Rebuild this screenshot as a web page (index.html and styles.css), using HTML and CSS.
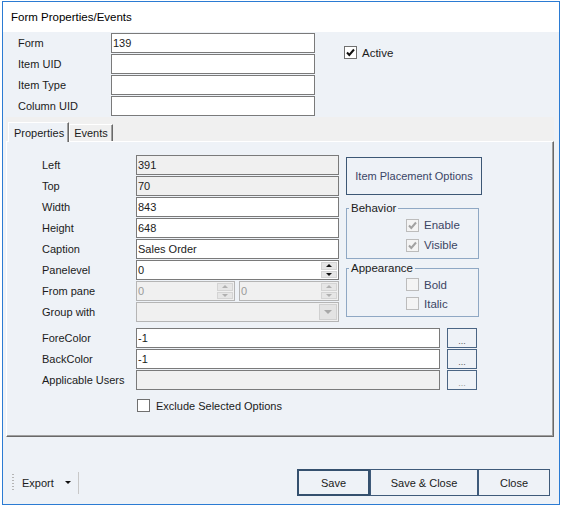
FILE: index.html
```html
<!DOCTYPE html>
<html lang="en">
<head>
    <meta charset="UTF-8">
    <title>Form Properties/Events</title>
    <link rel="stylesheet" href="styles.css">
</head>
<body>
    <div class="window">
        <div class="titlebar">Form Properties/Events</div>

        <div class="header">
            <div class="header-grid">
                <span class="label">Form</span>
                <div class="field">139</div>
                <span class="label">Item UID</span>
                <div class="field"></div>
                <span class="label">Item Type</span>
                <div class="field"></div>
                <span class="label">Column UID</span>
                <div class="field"></div>
            </div>
            <div class="check active-check">
                <span class="box">
                    <svg width="11" height="11" viewBox="0 0 11 11"><path d="M2 5.5 L4.3 8 L9 2.5" fill="none" stroke="#111" stroke-width="2"/></svg>
                </span>
                <span>Active</span>
            </div>
        </div>

        <div class="tabs">
            <div class="tab-strip">
                <span class="tab selected">Properties</span>
                <span class="tab">Events</span>
            </div>
            <div class="tab-page">
                <div class="page-top">
                    <div class="prop-grid">
                        <span class="label">Left</span>
                        <div class="field disabled-bg">391</div>
                        <span class="label">Top</span>
                        <div class="field disabled-bg">70</div>
                        <span class="label">Width</span>
                        <div class="field">843</div>
                        <span class="label">Height</span>
                        <div class="field">648</div>
                        <span class="label">Caption</span>
                        <div class="field">Sales Order</div>
                        <span class="label">Panelevel</span>
                        <div class="field spin-field">
                            <span class="value">0</span>
                            <span class="spin">
                                <span class="spin-btn"><i class="up"></i></span>
                                <span class="spin-btn"><i class="down"></i></span>
                            </span>
                        </div>
                        <span class="label">From pane</span>
                        <div class="pane-pair">
                            <div class="field spin-field disabled">
                                <span class="value">0</span>
                                <span class="spin">
                                    <span class="spin-btn"><i class="up"></i></span>
                                    <span class="spin-btn"><i class="down"></i></span>
                                </span>
                            </div>
                            <div class="field spin-field disabled">
                                <span class="value">0</span>
                                <span class="spin">
                                    <span class="spin-btn"><i class="up"></i></span>
                                    <span class="spin-btn"><i class="down"></i></span>
                                </span>
                            </div>
                        </div>
                        <span class="label">Group with</span>
                        <div class="field combo disabled">
                            <span class="value"></span>
                            <span class="combo-btn"><i class="down"></i></span>
                        </div>
                    </div>

                    <div class="side">
                        <button class="placement-btn">Item Placement Options</button>
                        <fieldset class="group">
                            <legend>Behavior</legend>
                            <div class="check group-check">
                                <span class="box disabled">
                                    <svg width="11" height="11" viewBox="0 0 11 11"><path d="M2 5.5 L4.3 8 L9 2.5" fill="none" stroke="#a2a2a2" stroke-width="2"/></svg>
                                </span>
                                <span class="dim">Enable</span>
                            </div>
                            <div class="check group-check">
                                <span class="box disabled">
                                    <svg width="11" height="11" viewBox="0 0 11 11"><path d="M2 5.5 L4.3 8 L9 2.5" fill="none" stroke="#a2a2a2" stroke-width="2"/></svg>
                                </span>
                                <span class="dim">Visible</span>
                            </div>
                        </fieldset>
                        <fieldset class="group appearance">
                            <legend>Appearance</legend>
                            <div class="check group-check">
                                <span class="box disabled"></span>
                                <span class="dim">Bold</span>
                            </div>
                            <div class="check group-check">
                                <span class="box disabled"></span>
                                <span class="dim">Italic</span>
                            </div>
                        </fieldset>
                    </div>
                </div>

                <div class="color-grid">
                    <span class="label">ForeColor</span>
                    <div class="field">-1</div>
                    <button class="dots-btn">...</button>
                    <span class="label">BackColor</span>
                    <div class="field">-1</div>
                    <button class="dots-btn">...</button>
                    <span class="label">Applicable Users</span>
                    <div class="field disabled-bg"></div>
                    <button class="dots-btn faint">...</button>
                </div>

                <div class="check exclude">
                    <span class="box"></span>
                    <span>Exclude Selected Options</span>
                </div>
            </div>
        </div>

        <div class="footer">
            <div class="export">
                <span class="grip"></span>
                <span>Export</span>
                <i class="down export-arrow"></i>
                <span class="sep"></span>
            </div>
            <div class="buttons">
                <button class="btn default">Save</button>
                <button class="btn wide">Save &amp; Close</button>
                <button class="btn">Close</button>
            </div>
        </div>
    </div>
</body>
</html>
```

FILE: styles.css
```css
body {
    margin: 0;
    font-family: "Liberation Sans", Arial, sans-serif;
    font-size: 11px;
    color: #1b1b1b;
    background-color: #fff;
}
.window {
    width: 556px;
    height: 502px;
    margin: 1px 0 0 2px;
    border: 1px solid #2b7bd3;
    background-color: #eef2f7;
    display: flex;
    flex-direction: column;
}
.titlebar {
    height: 30px;
    line-height: 30px;
    padding-left: 8px;
    background-color: #fff;
    font-size: 11.5px;
    color: #000;
}
.header {
    height: 85px;
    box-sizing: border-box;
    padding: 1px 0 1px 15px;
    display: flex;
}
.header-grid {
    display: grid;
    grid-template-columns: 93px 204px;
    grid-auto-rows: 20px;
    row-gap: 1px;
}
.label {
    line-height: 20px;
    white-space: nowrap;
}
.field {
    height: 20px;
    box-sizing: border-box;
    border: 1px solid #7a7a7a;
    background-color: #fff;
    line-height: 18px;
    padding: 0 1px;
    overflow: hidden;
}
.disabled-bg {
    background-color: #f0f0f0;
}
.field.disabled {
    background-color: #f0f0f0;
    border-color: #b5b5b5;
    color: #9a9a9a;
}

/* checkboxes */
.check {
    display: flex;
    align-items: center;
    gap: 5px;
}
.box {
    width: 13px;
    height: 13px;
    box-sizing: border-box;
    border: 1px solid #707070;
    background-color: #fff;
    display: flex;
    align-items: center;
    justify-content: center;
}
.box.disabled {
    border-color: #bcbcbc;
    background-color: #f4f4f4;
}
.active-check {
    margin: 13px 0 0 29px;
    align-self: flex-start;
    height: 13px;
    font-size: 11.5px;
}

/* tabs */
.tabs {
    margin: 0 5px 0 3px;
    height: 320px;
    display: flex;
    flex-direction: column;
}
.tab-strip {
    height: 24px;
    background-color: #f0f0f0;
    display: flex;
    align-items: flex-end;
    padding-left: 2px;
    position: relative;
    z-index: 1;
}
.tab {
    height: 17px;
    line-height: 17px;
    padding: 0 4px;
    box-sizing: border-box;
    border-top: 1px solid #fff;
    border-left: 1px solid #fff;
    border-right: 1px solid #696969;
    box-shadow: inset -1px 0 0 #a0a0a0;
    background-color: #f0f0f0;
}
.tab.selected {
    height: 20px;
    margin-bottom: -1px;
    padding: 2px 4px 0 5px;
    line-height: 16px;
    background-color: #eef2f7;
}
.tab-page {
    flex: 1;
    border-top: 1px solid #fff;
    border-left: 1px solid #fff;
    border-right: 1px solid #696969;
    border-bottom: 1px solid #696969;
    box-shadow: inset -1px -1px 0 #a0a0a0;
    padding: 13px 0 0 35px;
}
.page-top {
    display: flex;
}
.prop-grid {
    display: grid;
    grid-template-columns: 94px 203px;
    grid-auto-rows: 20px;
    row-gap: 1px;
}
.spin-field,
.combo {
    display: flex;
    padding-right: 0;
}
.spin-field .value,
.combo .value {
    flex: 1;
}
.spin {
    width: 16px;
    display: flex;
    flex-direction: column;
    gap: 1px;
    padding: 1px 1px 1px 0;
}
.spin-btn {
    flex: 1;
    background-color: #e6e6e6;
    border: 1px solid #d4d4d4;
    display: flex;
    align-items: center;
    justify-content: center;
}
.up {
    border-left: 3px solid transparent;
    border-right: 3px solid transparent;
    border-bottom: 3px solid #111;
}
.down {
    border-left: 3px solid transparent;
    border-right: 3px solid transparent;
    border-top: 3px solid #111;
}
.disabled .up {
    border-bottom-color: #b0b0b0;
}
.disabled .down {
    border-top-color: #b0b0b0;
}
.pane-pair {
    display: grid;
    grid-template-columns: 99px 100px;
    column-gap: 4px;
}
.combo-btn {
    width: 16px;
    margin: 1px;
    background-color: #e3e3e3;
    border: 1px solid #d0d0d0;
    display: flex;
    align-items: center;
    justify-content: center;
}
.combo-btn .down {
    border-left-width: 4px;
    border-right-width: 4px;
    border-top: 4px solid #a8a8a8;
}

/* right side */
.side {
    margin-left: 7px;
    padding-top: 2px;
    width: 136px;
}
.placement-btn {
    display: block;
    width: 136px;
    height: 38px;
    border: 1px solid #3c5775;
    background-color: #eef2f7;
    font-family: "Liberation Sans", Arial, sans-serif;
    font-size: 11px;
    color: #3a4566;
    padding: 0;
}
.group {
    width: 133px;
    box-sizing: border-box;
    margin: 7px 0 0 0;
    padding: 0 0 0 2px;
    border: 1px solid #8fa8c4;
    height: 57px;
}
.group legend {
    padding: 0 2px;
    margin-left: 0;
    font-size: 11.5px;
    line-height: 13px;
}
.group.appearance {
    margin-top: 3px;
    height: 55px;
}
.group-check {
    height: 20px;
    margin-left: 57px;
}
.appearance .group-check {
    height: 19px;
}
.dim {
    color: #3b4563;
    font-size: 11.5px;
}

/* colour rows */
.color-grid {
    margin-top: 6px;
    display: grid;
    grid-template-columns: 94px 304px 37px;
    grid-auto-rows: 20px;
    row-gap: 1px;
}
.color-grid .dots-btn {
    margin-left: 7px;
}
.dots-btn {
    height: 20px;
    box-sizing: border-box;
    border: 1px solid #4a6584;
    background-color: #eef2f7;
    color: #555;
    font-size: 9px;
    padding: 6px 0 0 0;
    line-height: 10px;
}
.dots-btn.faint {
    color: #999;
}
.exclude {
    margin: 9px 0 0 95px;
    gap: 6px;
}

/* footer */
.footer {
    height: 67px;
    box-sizing: border-box;
    padding: 32px 9px 8px 9px;
    display: flex;
    justify-content: space-between;
    align-items: center;
}
.export {
    display: flex;
    align-items: center;
    height: 27px;
}
.grip {
    width: 2px;
    height: 18px;
    margin-right: 8px;
    background-image: linear-gradient(#b5b5b5 50%, transparent 50%);
    background-size: 2px 3px;
}
.export-arrow {
    margin-left: 11px;
}
.sep {
    width: 1px;
    height: 22px;
    background-color: #c8c8c8;
    margin-left: 7px;
}
.buttons {
    display: flex;
}
.btn {
    height: 27px;
    width: 72px;
    border: 1px solid #3e5a7a;
    background-color: #eef2f7;
    font-family: "Liberation Sans", Arial, sans-serif;
    font-size: 11px;
    color: #1b1b1b;
    padding: 0;
}
.btn.default {
    width: 73px;
    border: 2px solid #34506e;
}
.btn.wide {
    width: 108px;
}
```
